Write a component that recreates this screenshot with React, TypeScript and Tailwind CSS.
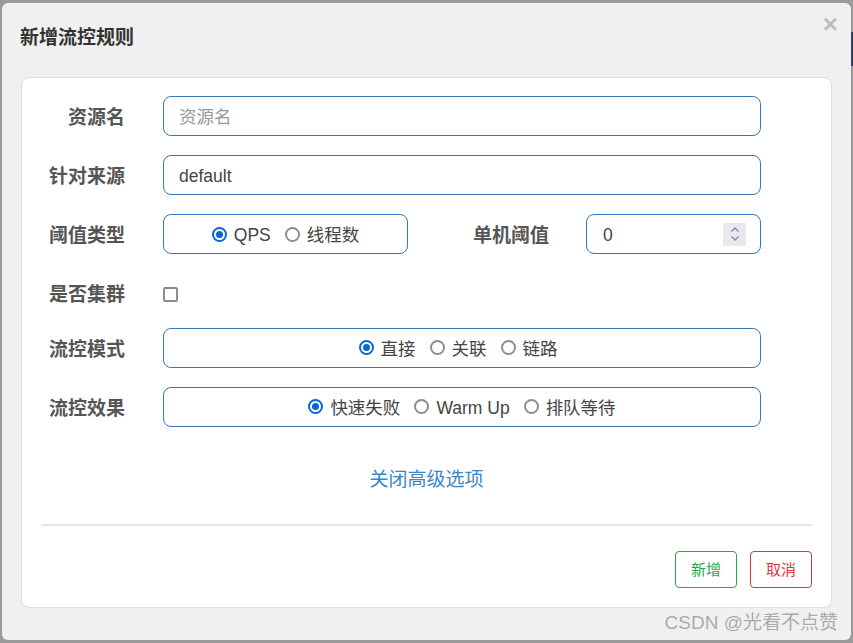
import React from "react";

const font = { fontFamily: '"Liberation Sans", "Noto Sans CJK SC", sans-serif' };

function Radio({ checked, label }: { checked?: boolean; label: string }) {
  return (
    <label className="flex items-center gap-[7px]">
      {checked ? (
        <span className="w-[15px] h-[15px] rounded-full border-[2px] border-[#0a66d6] flex items-center justify-center">
          <span className="w-[7px] h-[7px] rounded-full bg-[#0a66d6]" />
        </span>
      ) : (
        <span className="w-[15px] h-[15px] rounded-full border-[2px] border-[#8c8c96] bg-white" />
      )}
      <span className="text-[17.5px] text-[#444] pt-[2px]">{label}</span>
    </label>
  );
}

function Label({ children, className = "" }: { children: React.ReactNode; className?: string }) {
  return (
    <div className={`text-[19px] font-bold text-[#555] text-right shrink-0 pt-[4px] ${className}`}>{children}</div>
  );
}

const box = "h-[40px] rounded-[8px] border border-[#3577b9] bg-white flex items-center";

export default function App() {
  return (
    <div className="w-[853px] h-[643px] bg-[#9a9a9a] pt-[3px] pl-[2px] relative overflow-hidden" style={font}>
      <div className="absolute right-0 top-[32px] w-[2px] h-[34px] bg-[#2d3e63]" />
      <div className="w-[849px] h-[637px] bg-[#f0f0f0] rounded-[6px] flex flex-col relative">
        <div className="h-[74px] px-[18px] flex items-center">
          <h3 className="text-[19px] font-bold text-[#333] mb-[4px]">新增流控规则</h3>
          <button className="absolute right-[13px] top-[8px] text-[26px] leading-none text-[#bdbdbd] font-bold">×</button>
        </div>
        <div className="mx-[19px] h-[531px] bg-white border border-[#dcdcdc] rounded-[8px] px-[19px] pt-[18px] pb-[19px] flex flex-col">
          <div className="flex items-center">
            <Label className="w-[84px]">资源名</Label>
            <div className={`${box} ml-[38px] flex-1 mr-[51px] px-[15px]`}>
              <span className="text-[17.5px] text-[#999] pt-[2px]">资源名</span>
            </div>
          </div>
          <div className="flex items-center mt-[19px]">
            <Label className="w-[84px]">针对来源</Label>
            <div className={`${box} ml-[38px] flex-1 mr-[51px] px-[15px]`}>
              <span className="text-[17.5px] text-[#444] pt-[2px]">default</span>
            </div>
          </div>
          <div className="flex items-center mt-[19px]">
            <Label className="w-[84px]">阈值类型</Label>
            <div className={`${box} ml-[38px] w-[245px] justify-center gap-[14px]`}>
              <Radio checked label="QPS" />
              <Radio label="线程数" />
            </div>
            <Label className="w-[141px]">单机阈值</Label>
            <div className={`${box} ml-[37px] flex-1 mr-[51px] pl-[16px] pr-[14px] justify-between`}>
              <span className="text-[17.5px] text-[#444] pt-[2px]">0</span>
              <span className="w-[23px] h-[23px] bg-[#e8e8ee] flex flex-col items-center justify-center">
                <svg width="10" height="16" viewBox="0 0 10 16" fill="none" stroke="#8a8a96" strokeWidth="1.4">
                  <path d="M1.5 5.5 L5 2 L8.5 5.5" />
                  <path d="M1.5 10.5 L5 14 L8.5 10.5" />
                </svg>
              </span>
            </div>
          </div>
          <div className="flex items-center mt-[22px] h-[44px]">
            <Label className="w-[84px]">是否集群</Label>
            <span className="ml-[38px] mt-[3px] w-[15px] h-[15px] rounded-[2px] border-[2px] border-[#8c8c96] bg-white" />
          </div>
          <div className="flex items-center mt-[18px]">
            <Label className="w-[84px]">流控模式</Label>
            <div className={`${box} ml-[38px] flex-1 mr-[51px] justify-center gap-[14px] pr-[8px]`}>
              <Radio checked label="直接" />
              <Radio label="关联" />
              <Radio label="链路" />
            </div>
          </div>
          <div className="flex items-center mt-[19px]">
            <Label className="w-[84px]">流控效果</Label>
            <div className={`${box} ml-[38px] flex-1 mr-[51px] justify-center gap-[14px]`}>
              <Radio checked label="快速失败" />
              <Radio label="Warm Up" />
              <Radio label="排队等待" />
            </div>
          </div>
          <div className="mt-[39px] text-center">
            <a className="text-[19px] text-[#3a86c8]">关闭高级选项</a>
          </div>
          <div className="mt-[30px] h-[2px] bg-[#e5e5e5]" />
          <div className="mt-[25px] flex justify-end gap-[13px]">
            <button className="w-[62px] h-[37px] rounded-[4px] border border-[#28a745] text-[15px] text-[#28a745] bg-white pt-[1px]">新增</button>
            <button className="w-[62px] h-[37px] rounded-[4px] border border-[#dc3545] text-[15px] text-[#dc3545] bg-white pt-[1px]">取消</button>
          </div>
        </div>
        <div className="absolute right-[13px] bottom-[3px] text-[19px] text-[#a9a9a9] [text-shadow:0_0_1px_#fff]">CSDN @光看不点赞</div>
      </div>
    </div>
  );
}
